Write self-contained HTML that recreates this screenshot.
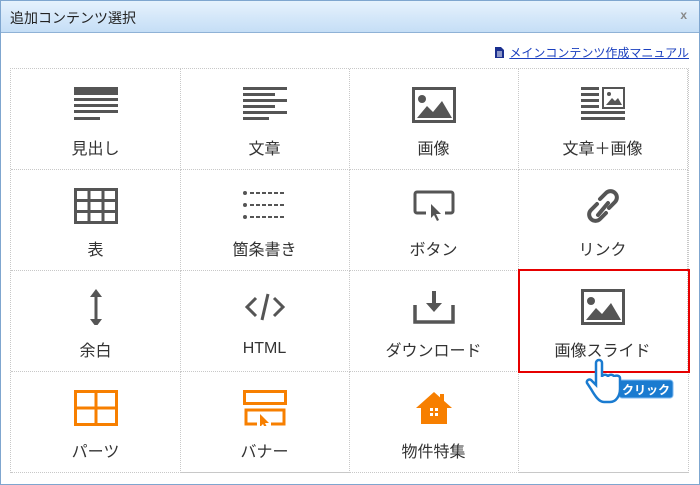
<!DOCTYPE html>
<html><head><meta charset="utf-8"><style>
*{margin:0;padding:0;box-sizing:border-box}
body{width:700px;height:485px;background:#fff;font-family:"Liberation Sans","Noto Sans CJK JP",sans-serif;position:relative;overflow:hidden}
.frame{position:absolute;left:0;top:0;width:700px;height:485px;border:1px solid #7fa6cf}
.hdr{position:absolute;left:1px;top:1px;width:698px;height:32px;background:linear-gradient(#e6f2fd,#c5def6);border-bottom:1px solid #8fb2d6;font-size:14px;color:#222;padding:7px 0 0 9px}
.x{position:absolute;right:12px;top:7px;font-size:12px;color:#888;font-weight:bold}
.man{position:absolute;right:11px;top:44px;font-size:12px;color:#1a3fbf;text-decoration:underline}
.grid{position:absolute;left:10px;top:68px;width:679px;height:405px;border:1px dotted #c8c8c8}
.c{position:absolute;width:170px;height:101px;border-right:1px dotted #c8c8c8;border-bottom:1px dotted #c8c8c8}
.c svg{position:absolute;left:50%;top:18px;transform:translateX(-50%)}
.c span{position:absolute;left:0;right:0;top:66px;text-align:center;font-size:16px;color:#333}
.red{position:absolute;left:518px;top:269px;width:172px;height:104px;border:2px solid #e60000}
</style></head><body>
<div class="frame"></div>
<div class="hdr">追加コンテンツ選択<span class="x">x</span></div>
<div class="man"><svg width="9" height="11" style="vertical-align:-1px;margin-right:5px"><path d="M0 0h6l3 3v8H0z" fill="#1a2f8f"/><path d="M2 5h5M2 7h5M2 9h5" stroke="#fff"/></svg>メインコンテンツ作成マニュアル</div>
<div class="grid">
<div class="c" style="left:0;top:0"><svg width="44" height="36"><rect x="0" y="0" width="44" height="8" fill="#555"/><rect x="0" y="11" width="44" height="3" fill="#555"/><rect x="0" y="17" width="44" height="3" fill="#555"/><rect x="0" y="23" width="44" height="3" fill="#555"/><rect x="0" y="30" width="26" height="3" fill="#555"/></svg><span>見出し</span></div>
<div class="c" style="left:169px;top:0"><svg width="44" height="36"><g fill="#555"><rect y="0" width="44" height="3"/><rect y="6" width="32" height="3"/><rect y="12" width="44" height="3"/><rect y="18" width="32" height="3"/><rect y="24" width="44" height="3"/><rect y="30" width="26" height="3"/></g></svg><span>文章</span></div>
<div class="c" style="left:338px;top:0"><svg width="44" height="36"><rect x="1.5" y="1.5" width="41" height="33" fill="none" stroke="#555" stroke-width="3"/><circle cx="10" cy="12" r="4" fill="#555"/><path d="M5 31l10-12 6 6 9-11 10 17z" fill="#555"/></svg><span>画像</span></div>
<div class="c" style="left:507px;top:0"><svg width="44" height="36"><g fill="#555"><rect y="0" width="18" height="3"/><rect y="6" width="18" height="3"/><rect y="12" width="18" height="3"/><rect y="18" width="18" height="3"/><rect y="24" width="44" height="3"/><rect y="30" width="44" height="3"/></g><rect x="22" y="1" width="21" height="20" fill="none" stroke="#555" stroke-width="2"/><circle cx="28" cy="7" r="2" fill="#555"/><path d="M25 18l6-7 3 3 3-3 4 7z" fill="#555"/></svg><span>文章＋画像</span></div>
<div class="c" style="left:0;top:101px"><svg width="44" height="36"><rect x="1.5" y="1.5" width="41" height="33" fill="none" stroke="#555" stroke-width="3"/><path d="M15 2v32M29 2v32M2 12.5h40M2 23.5h40" stroke="#555" stroke-width="3"/></svg><span>表</span></div>
<div class="c" style="left:169px;top:101px"><svg width="44" height="36"><g fill="#555"><circle cx="2" cy="5" r="2"/><circle cx="2" cy="17" r="2"/><circle cx="2" cy="29" r="2"/></g><g stroke="#555" stroke-width="2" stroke-dasharray="4 2"><path d="M7 5h36M7 17h36M7 29h36"/></g></svg><span>箇条書き</span></div>
<div class="c" style="left:338px;top:101px"><svg width="44" height="36"><path d="M14 25H5a2 2 0 0 1-2-2V6a2 2 0 0 1 2-2h34a2 2 0 0 1 2 2v17a2 2 0 0 1-2 2h-6" fill="none" stroke="#555" stroke-width="3"/><path d="M19 16l0 14 3-3 3 6 2-1-3-6 5 0z" fill="#555"/></svg><span>ボタン</span></div>
<div class="c" style="left:507px;top:101px"><svg width="44" height="36"><g fill="none" stroke="#555" stroke-width="4" stroke-linecap="round"><path d="M19 11l6-6a6 6 0 0 1 9 9l-6 6"/><path d="M25 25l-6 6a6 6 0 0 1-9-9l6-6"/><path d="M17 27l10-12"/></g></svg><span>リンク</span></div>
<div class="c" style="left:0;top:202px"><svg width="44" height="36"><path d="M22 6v26" stroke="#555" stroke-width="3"/><path d="M16 8l6-8 6 8zM16 30l6 8 6-8z" fill="#555"/></svg><span>余白</span></div>
<div class="c" style="left:169px;top:202px"><svg width="44" height="36"><g fill="none" stroke="#555" stroke-width="3"><path d="M13 9l-9 9 9 9M31 9l9 9-9 9M25 5l-6 26"/></g></svg><span style="top:69px">HTML</span></div>
<div class="c" style="left:338px;top:202px"><svg width="44" height="36"><path d="M3 16v17h38V16" fill="none" stroke="#555" stroke-width="3.5"/><path d="M20 2h4v12h6l-8 9-8-9h6z" fill="#555"/></svg><span>ダウンロード</span></div>
<div class="c" style="left:507px;top:202px"><svg width="44" height="36"><rect x="1.5" y="1.5" width="41" height="33" fill="none" stroke="#555" stroke-width="3"/><circle cx="10" cy="12" r="4" fill="#555"/><path d="M5 31l10-12 6 6 9-11 10 17z" fill="#555"/></svg><span>画像スライド</span></div>
<div class="c" style="left:0;top:303px"><svg width="44" height="36"><rect x="1.5" y="1.5" width="41" height="33" fill="none" stroke="#f77f00" stroke-width="3"/><path d="M22 2v32M2 18h40" stroke="#f77f00" stroke-width="3"/></svg><span>パーツ</span></div>
<div class="c" style="left:169px;top:303px"><svg width="44" height="36"><rect x="1.5" y="1.5" width="41" height="12" fill="none" stroke="#f77f00" stroke-width="3"/><path d="M14 34H3V20h38v14H28" fill="none" stroke="#f77f00" stroke-width="3"/><path d="M17 24v13l3-3 2 4 2-1-2-4h4z" fill="#f77f00"/></svg><span>バナー</span></div>
<div class="c" style="left:338px;top:303px"><svg width="44" height="36"><path d="M22 2l18 16h-5v16H9V18H4zM28 4h4v8l-4-4z" fill="#f77f00"/><g fill="#fff"><rect x="18" y="18" width="3" height="3"/><rect x="23" y="18" width="3" height="3"/><rect x="18" y="23" width="3" height="3"/><rect x="23" y="23" width="3" height="3"/></g></svg><span>物件特集</span></div>
<div class="c" style="left:507px;top:303px;border-right:none"></div>
</div>
<div class="red"></div>
<svg style="position:absolute;left:583px;top:358px" width="92" height="52">
<rect x="36" y="22" width="54" height="18" rx="3" fill="#1a7bd0" stroke="#7fbaf0"/>
<text x="63" y="36" font-size="12" font-weight="bold" fill="#fff" text-anchor="middle" font-family="Liberation Sans,Noto Sans CJK JP,sans-serif">クリック</text>
<path d="M13 5a3 3 0 0 1 6 0v14c0-3 6-3 6 0 0-3 6-3 6 0 0-2 6-2 6 1v11c0 7-4 13-10 13h-6c-5 0-9-6-13-13l-4-6c-1-3 3-5 5-2l4 4z" fill="#fff" stroke="#1a7bd0" stroke-width="2.5"/>
</svg>
</body></html>
